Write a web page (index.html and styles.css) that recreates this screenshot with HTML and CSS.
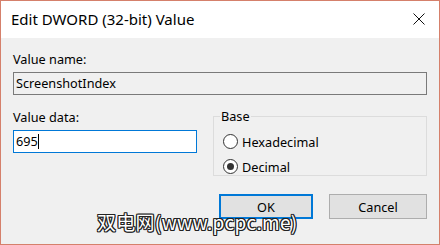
FILE: index.html
```html
<!DOCTYPE html>
<html lang="en">
<head>
    <meta charset="UTF-8">
    <title>Edit DWORD (32-bit) Value</title>
    <link rel="stylesheet" href="styles.css">
</head>
<body>

<div class="window">
    <div class="titlebar">
        <span class="title">Edit DWORD (32-bit) Value</span>
        <svg class="close" width="12" height="12" viewBox="0 0 12 12">
            <path d="M0.5 0.5 L11.5 11.5 M11.5 0.5 L0.5 11.5" stroke="#111" stroke-width="1" fill="none"/>
        </svg>
    </div>

    <div class="content">
        <div class="label">Value name:</div>
        <div class="field readonly">ScreenshotIndex</div>

        <div class="row">
            <div class="data-col">
                <div class="label">Value data:</div>
                <div class="field focused">695<span class="caret"></span></div>
            </div>
            <fieldset class="base">
                <legend>Base</legend>
                <div class="radio"><span class="dot"></span>Hexadecimal</div>
                <div class="radio checked"><span class="dot"></span>Decimal</div>
            </fieldset>
        </div>

        <div class="buttons">
            <div class="btn default">OK</div>
            <div class="btn">Cancel</div>
        </div>
    </div>

    <div class="watermark">双电网(www.pcpc.me)</div>
</div>

</body>
</html>
```

FILE: styles.css
```css
body {
    margin: 0;
    font-family: 'Noto Sans', 'Liberation Sans', sans-serif;
    color: #000;
}
.window {
    position: relative;
    width: 440px;
    height: 245px;
    box-sizing: border-box;
    border: 1px solid #d5806b;
    background: #f0f0f0;
    overflow: hidden;
}
.titlebar {
    height: 37px;
    background: #fff;
    display: flex;
    align-items: center;
    justify-content: space-between;
    padding: 0 14px 0 10px;
}
.title {
    font-size: 15px;
    margin-top: -2px;
}
.close { margin-top: -1px; }

.content {
    padding: 13px 12px 0 12px;
}
.label {
    font-size: 12.7px;
    line-height: 16px;
    margin-bottom: 5px;
}
.field {
    height: 23px;
    box-sizing: border-box;
    border: 1px solid #7a7a7a;
    font-size: 12.7px;
    line-height: 21px;
    padding-left: 2px;
    background: #fff;
    display: flex;
    align-items: center;
}
.field.readonly { background: #f0f0f0; }
.field.focused { border-color: #0078d7; }
.caret {
    display: inline-block;
    width: 1px;
    height: 15px;
    background: #000;
}

.row {
    display: flex;
    justify-content: space-between;
    margin-top: 14px;
}
.data-col { width: 184px; }

.base {
    width: 214px;
    height: 67px;
    box-sizing: border-box;
    margin: 0;
    padding: 6px 0 0 9px;
    border: 1px solid #dcdcdc;
    font-size: 12.7px;
}
.base legend {
    padding: 0 1px;
    margin-left: -3px;
    line-height: 14px;
}
.radio {
    display: flex;
    align-items: center;
    height: 25px;
}
.dot {
    width: 15px;
    height: 15px;
    box-sizing: border-box;
    border: 1px solid #333;
    border-radius: 50%;
    background: #fff;
    margin-right: 4px;
    position: relative;
}
.radio.checked .dot::after {
    content: "";
    position: absolute;
    left: 3px;
    top: 3px;
    width: 7px;
    height: 7px;
    border-radius: 50%;
    background: #333;
}

.buttons {
    display: flex;
    justify-content: flex-end;
    gap: 16px;
    margin-top: 18px;
}
.btn {
    width: 98px;
    height: 25px;
    box-sizing: border-box;
    border: 1px solid #adadad;
    background: #e1e1e1;
    font-size: 12.7px;
    display: flex;
    align-items: center;
    justify-content: center;
}
.btn.default {
    width: 94px;
    border: 2px solid #0078d7;
}

.watermark {
    position: absolute;
    left: 96px;
    top: 208px;
    font-size: 19px;
    line-height: 26px;
    letter-spacing: 0.25px;
    font-family: 'Noto Sans CJK SC', sans-serif;
    color: #fff;
    text-shadow: 1px 1px 0 #222, -1px -1px 0 #222, 1px -1px 0 #222, -1px 1px 0 #222, 1px 0 0 #222, -1px 0 0 #222, 0 1px 0 #222, 0 -1px 0 #222;
}
```
